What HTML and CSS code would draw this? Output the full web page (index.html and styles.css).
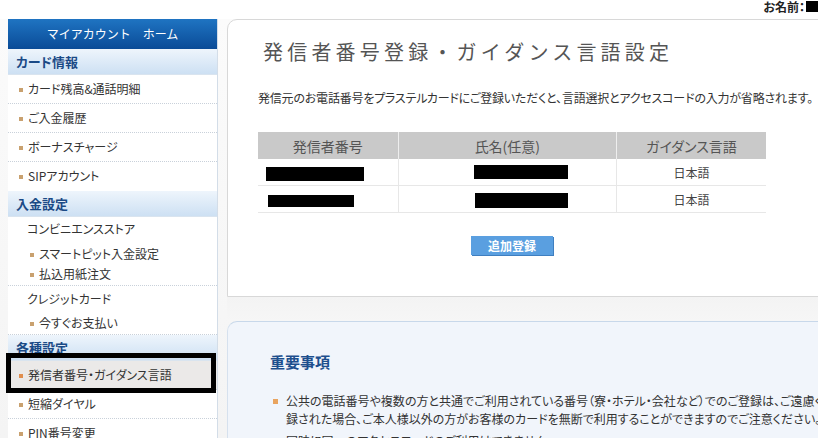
FILE: index.html
```html
<!DOCTYPE html>
<html lang="ja">
<head>
    <meta charset="UTF-8">
    <meta name="viewport" content="width=device-width, initial-scale=1.0">
    <title>発信者番号登録・ガイダンス言語設定</title>
    <link rel="stylesheet" href="styles.css">
</head>
<body>
    <div class="topbar">
        <span class="onamae">お名前：</span><span class="kuro nombre"></span>
    </div>
    <div class="pagina">
        <div class="menu">
            <a class="menu-home" href="#">マイアカウント　ホーム</a>
            <div class="menu-titulo">カード情報</div>
            <ul class="menu-lista">
                <li class="item">カード残高&amp;通話明細</li>
                <li class="item">ご入金履歴</li>
                <li class="item">ボーナスチャージ</li>
                <li class="item">SIPアカウント</li>
            </ul>
            <div class="menu-titulo">入金設定</div>
            <div class="grupo">
                <div class="grupo-nombre">コンビニエンスストア</div>
                <div class="sub">スマートピット入金設定</div>
                <div class="sub">払込用紙注文</div>
            </div>
            <div class="grupo">
                <div class="grupo-nombre">クレジットカード</div>
                <div class="sub">今すぐお支払い</div>
            </div>
            <div class="menu-titulo">各種設定</div>
            <ul class="menu-lista">
                <li class="item activo">発信者番号・ガイダンス言語</li>
                <li class="item">短縮ダイヤル</li>
                <li class="item">PIN番号変更</li>
            </ul>
        </div>

        <div class="contenido">
            <div class="tarjeta">
                <h1 class="titulo">発信者番号登録・ガイダンス言語設定</h1>
                <p class="descripcion">発信元のお電話番号をプラステルカードにご登録いただくと、言語選択とアクセスコードの入力が省略されます。</p>
                <table class="tabla">
                    <tr>
                        <th class="c1">発信者番号</th>
                        <th class="c2">氏名(任意)</th>
                        <th class="c3">ガイダンス言語</th>
                    </tr>
                    <tr>
                        <td class="izq"><span class="kuro k1"></span></td>
                        <td><span class="kuro k2"></span></td>
                        <td>日本語</td>
                    </tr>
                    <tr>
                        <td class="izq"><span class="kuro k3"></span></td>
                        <td><span class="kuro k4"></span></td>
                        <td>日本語</td>
                    </tr>
                </table>
                <div class="acciones">
                    <button class="boton">追加登録</button>
                </div>
            </div>
            <div class="separador"></div>
            <div class="aviso">
                <h2 class="aviso-titulo">重要事項</h2>
                <ul class="aviso-lista">
                    <li>公共の電話番号や複数の方と共通でご利用されている番号（寮・ホテル・会社など）でのご登録は、ご遠慮ください。<br>録された場合、ご本人様以外の方がお客様のカードを無断で利用することができますのでご注意ください。</li>
                    <li>同時に同一のアクセスコードのご利用はできません。</li>
                </ul>
            </div>
        </div>
    </div>
</body>
</html>
```

FILE: styles.css
```css
html, body {
    margin: 0;
    padding: 0;
    overflow: hidden;
}
body {
    font-family: "Noto Sans CJK JP", "Liberation Sans", sans-serif;
    font-size: 12px;
    color: #333;
    background-color: #f6f6f6;
    font-feature-settings: "palt";
    width: 818px;
    height: 438px;
}
ul {
    list-style: none;
    margin: 0;
    padding: 0;
}

/* barra de arriba */
.topbar {
    height: 19px;
    background-color: #fff;
    display: flex;
    justify-content: flex-end;
    align-items: flex-start;
}
.onamae {
    font-weight: bold;
    color: #222;
    line-height: 13px;
    margin-right: 1px;
}
.kuro {
    display: inline-block;
    background-color: #000;
}
.nombre {
    width: 12px;
    height: 11px;
    margin-top: 1px;
}

.pagina {
    display: flex;
    gap: 9px;
    padding-left: 8px;
    background: linear-gradient(#fbfbfb, #f2f2f2);
}

/* menu lateral */
.menu {
    width: 209px;
    flex-shrink: 0;
    background-color: #fff;
    border-right: 1px solid #d3dde8;
}
.menu-home {
    display: block;
    height: 30px;
    line-height: 30px;
    text-align: center;
    color: #fff;
    text-decoration: none;
    background: linear-gradient(#1f74c2, #0a4b97);
    font-feature-settings: normal;
}
.menu-titulo {
    height: 26px;
    line-height: 25px;
    padding-left: 8px;
    font-weight: bold;
    font-size: 13px;
    color: #1b4a86;
    background: linear-gradient(#eef5fc, #cde0f3);
    border-bottom: 1px solid #d9e4ef;
    box-sizing: border-box;
}
.item {
    position: relative;
    height: 29px;
    line-height: 28px;
    padding-left: 11px;
    border-bottom: 1px dotted #c9d1da;
    box-sizing: border-box;
}
.item::before,
.sub::before {
    content: "";
    display: inline-block;
    width: 4px;
    height: 4px;
    background-color: #c9a16f;
    margin-right: 5px;
    vertical-align: middle;
    position: relative;
    top: -1px;
}
.item:last-child {
    border-bottom: none;
}
.item.activo {
    background-color: #ebe9e8;
}
.item.activo::before {
    background-color: #e08d4d;
}
/* recuadro negro de la captura */
.item.activo::after {
    content: "";
    position: absolute;
    top: -8px;
    left: -2px;
    right: 1px;
    bottom: -4px;
    border: 5px solid #000;
}
.grupo {
    padding: 0 0 1px 19px;
    border-bottom: 1px dotted #c9d1da;
}
.grupo + .grupo {
    padding-top: 1px;
}
.grupo:last-of-type {
    border-bottom: none;
}
.grupo-nombre {
    line-height: 24px;
}
.sub {
    padding-left: 3px;
    line-height: 20px;
}
.grupo-nombre + .sub {
    margin-top: 3px;
}
.grupo + .grupo .grupo-nombre + .sub {
    margin-top: 2px;
}

/* contenido */
.contenido {
    width: 640px;
    flex-shrink: 0;
}
.tarjeta {
    background-color: #fff;
    border: 1px solid #d8d8d8;
    border-top-left-radius: 10px;
    padding: 20px 0 40px 30px;
    height: 278px;
    box-sizing: border-box;
}
.titulo {
    margin: 0 0 0 5px;
    font-size: 20px;
    font-weight: normal;
    letter-spacing: 4.2px;
    color: #555;
    line-height: 24px;
    font-feature-settings: normal;
}
.descripcion {
    margin: 26px 0 0;
    white-space: nowrap;
    line-height: 16px;
    letter-spacing: -0.2px;
}
.tabla {
    margin-top: 26px;
    border-collapse: collapse;
    width: 508px;
}
.tabla th {
    height: 27px;
    padding: 0;
    background-color: #c9c9c9;
    color: #555;
    font-size: 14px;
    font-weight: normal;
    border-left: 1px solid #eee;
}
.tabla th:first-child,
.tabla td:first-child {
    border-left: none;
}
.c1 { width: 140px; }
.c2 { width: 218px; }
.c3 { width: 150px; }
.tabla td {
    height: 26px;
    padding: 0;
    text-align: center;
    color: #444;
    border-bottom: 1px solid #e7e7e7;
    border-left: 1px solid #e7e7e7;
}
.tabla td.izq {
    text-align: left;
}
.k1 { width: 98px; height: 14px; margin-left: 8px; vertical-align: middle; }
.k2 { width: 94px; height: 14px; margin-left: 28px; position: relative; top: -2px; vertical-align: middle; }
.k3 { width: 86px; height: 12px; margin-left: 10px; vertical-align: middle; }
.k4 { width: 93px; height: 15px; margin-left: 28px; vertical-align: middle; }
.acciones {
    width: 508px;
    text-align: center;
    margin-top: 23px;
}
.boton {
    width: 82px;
    height: 19px;
    padding: 0;
    border: none;
    background-color: #5a9fe0;
    color: #fff;
    font-family: inherit;
    font-size: 12px;
    font-weight: bold;
    line-height: 19px;
    box-shadow: 1px 1px 0 #3f7fc0;
}

.separador {
    height: 24px;
    background: linear-gradient(#f3f3f3, #f6f6f6);
}
.aviso {
    background-color: #f1f5fb;
    border-top: 1px solid #c8d8ea;
    border-left: 1px solid #d6e1ee;
    border-top-left-radius: 10px;
    padding: 28px 0 0 42px;
    height: 200px;
}
.aviso-titulo {
    margin: 0;
    font-size: 15px;
    color: #1d4f8d;
    line-height: 24px;
}
.aviso-lista {
    margin-top: 18px;
    padding-left: 3px;
}
.aviso-lista li {
    position: relative;
    padding-left: 13px;
    line-height: 18px;
    white-space: nowrap;
    margin-bottom: 4px;
}
.aviso-lista li::before {
    content: "";
    position: absolute;
    left: 0;
    top: 7px;
    width: 5px;
    height: 5px;
    background-color: #e9a45f;
}
```
